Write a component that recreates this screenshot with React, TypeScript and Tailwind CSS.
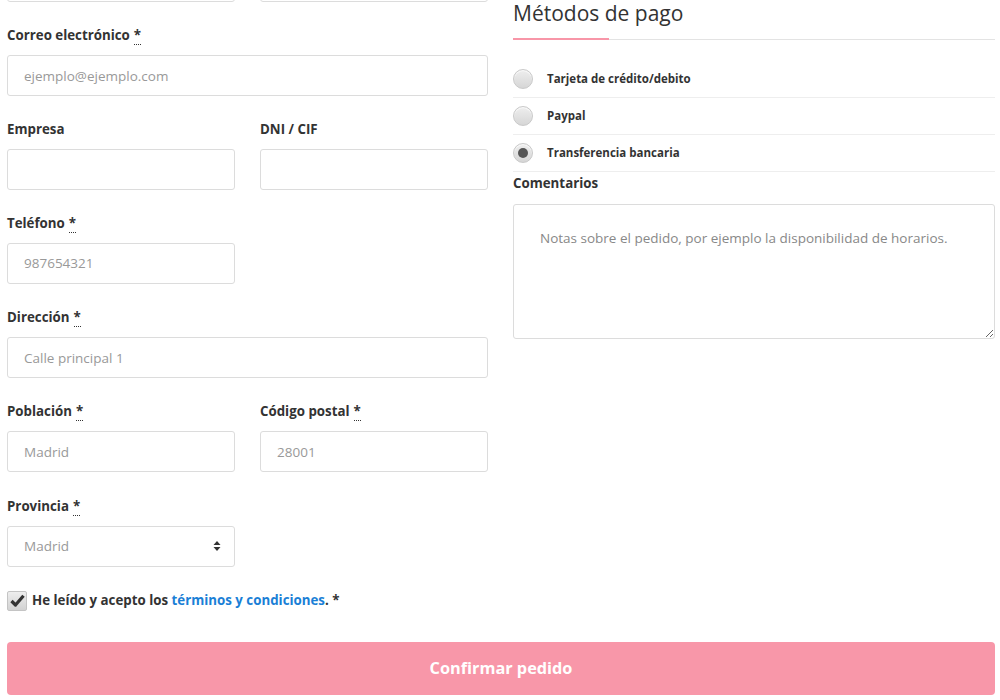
import React from 'react';

const Req = () => (
  <abbr className="no-underline border-b border-dotted border-[#333] leading-none ml-1" title="obligatorio">
    *
  </abbr>
);

const Field: React.FC<{ label: string; required?: boolean; placeholder?: string }> = ({ label, required, placeholder }) => (
  <div className="flex flex-col">
    <label className="text-[13.3px] leading-[20px] font-bold text-[#333] mb-[10px]">
      {label}
      {required && <Req />}
    </label>
    <input
      className="h-[41px] w-full border border-[#dcdcdc] rounded-[3px] px-[16px] text-[13.5px] text-[#555] placeholder:text-[#999] outline-none"
      placeholder={placeholder}
    />
  </div>
);

const Radio: React.FC<{ label: string; checked?: boolean }> = ({ label, checked }) => (
  <div className="h-[37px] flex items-center border-b border-[#eeeeee]">
    <span className="w-[20px] h-[20px] rounded-full border border-[#c9c9c9] bg-gradient-to-b from-[#eeeeee] to-[#d6d6d6] flex items-center justify-center shadow-[inset_0_1px_1px_rgba(255,255,255,0.8)]">
      {checked && <span className="w-[10px] h-[10px] rounded-full bg-[#555]" />}
    </span>
    <span className="ml-[14px] text-[11.5px] font-bold text-[#333]">{label}</span>
  </div>
);

export default function App() {
  return (
    <div className="w-[1000px] h-[700px] overflow-hidden bg-white font-['Open_Sans',sans-serif] text-[#333]">
      <div className="pl-[7px] pr-[5px]">
        <div className="flex gap-[25px]">
          {/* Datos de facturación */}
          <div className="w-[481px] flex flex-col">
            <div className="grid grid-cols-2 gap-[25px] -mt-[39px]">
              <input className="h-[41px] border border-[#dcdcdc] rounded-[3px]" />
              <input className="h-[41px] border border-[#dcdcdc] rounded-[3px]" />
            </div>
            <div className="mt-[23px]">
              <Field label="Correo electrónico" required placeholder="ejemplo@ejemplo.com" />
            </div>
            <div className="grid grid-cols-2 gap-[25px] mt-[22.5px]">
              <Field label="Empresa" />
              <Field label="DNI / CIF" />
            </div>
            <div className="grid grid-cols-2 gap-[25px] mt-[23.25px]">
              <Field label="Teléfono" required placeholder="987654321" />
            </div>
            <div className="mt-[23.25px]">
              <Field label="Dirección" required placeholder="Calle principal 1" />
            </div>
            <div className="grid grid-cols-2 gap-[25px] mt-[23.25px]">
              <Field label="Población" required placeholder="Madrid" />
              <Field label="Código postal" required placeholder="28001" />
            </div>
            <div className="grid grid-cols-2 gap-[25px] mt-[23.25px]">
              <div className="flex flex-col">
                <label className="text-[13.3px] leading-[20px] font-bold text-[#333] mb-[10px]">
                  Provincia
                  <Req />
                </label>
                <div className="h-[41px] border border-[#dcdcdc] rounded-[3px] pl-[16px] pr-[13px] flex items-center justify-between">
                  <span className="text-[13.5px] text-[#999]">Madrid</span>
                  <svg width="8" height="12" viewBox="0 0 8 12" className="text-[#333]">
                    <path d="M4 1 L7.5 5 H0.5 Z" fill="currentColor" />
                    <path d="M4 11 L7.5 7 H0.5 Z" fill="currentColor" />
                  </svg>
                </div>
              </div>
            </div>
          </div>

          {/* Métodos de pago */}
          <div className="w-[482px] flex flex-col">
            <div className="relative border-b border-[#e3e3e3] pb-[13px]">
              <h3 className="text-[21px] leading-[26px] font-normal text-[#333]">Métodos de pago</h3>
              <span className="absolute left-0 -bottom-px h-[2px] w-[96px] bg-[#f896a8]" />
            </div>
            <div className="mt-[21px]">
              <Radio label="Tarjeta de crédito/debito" />
              <Radio label="Paypal" />
              <Radio label="Transferencia bancaria" checked />
            </div>
            <label className="text-[13.3px] leading-[20px] font-bold text-[#333] mt-[1px] mb-[11px]">Comentarios</label>
            <textarea
              className="h-[135px] w-full border border-[#dcdcdc] rounded-[3px] pl-[26px] pr-[16px] pt-[22px] text-[13.5px] leading-[22px] placeholder:text-[#888] outline-none resize-y"
              placeholder="Notas sobre el pedido, por ejemplo la disponibilidad de horarios."
            />
          </div>
        </div>

        <div className="mt-[24px] flex items-center h-[20px]">
          <span className="w-[20px] h-[20px] rounded-[2px] border border-[#c4c4c4] bg-gradient-to-b from-[#eeeeee] to-[#d2d2d2] flex items-center justify-center">
            <svg width="15" height="13" viewBox="0 0 15 13">
              <path d="M1.5 7 L5.5 11 L13.5 1.8" fill="none" stroke="#333" strokeWidth="3.2" strokeLinejoin="round" />
            </svg>
          </span>
          <span className="ml-[5px] text-[13.3px] font-bold text-[#333]">
            He leído y acepto los <a className="text-[#1a7fd6]" href="#">términos y condiciones</a>. *
          </span>
        </div>

        <button className="mt-[31px] w-full h-[53px] rounded-[4px] bg-[#f897a9] text-white text-[16.3px] font-bold">
          Confirmar pedido
        </button>
      </div>
    </div>
  );
}
